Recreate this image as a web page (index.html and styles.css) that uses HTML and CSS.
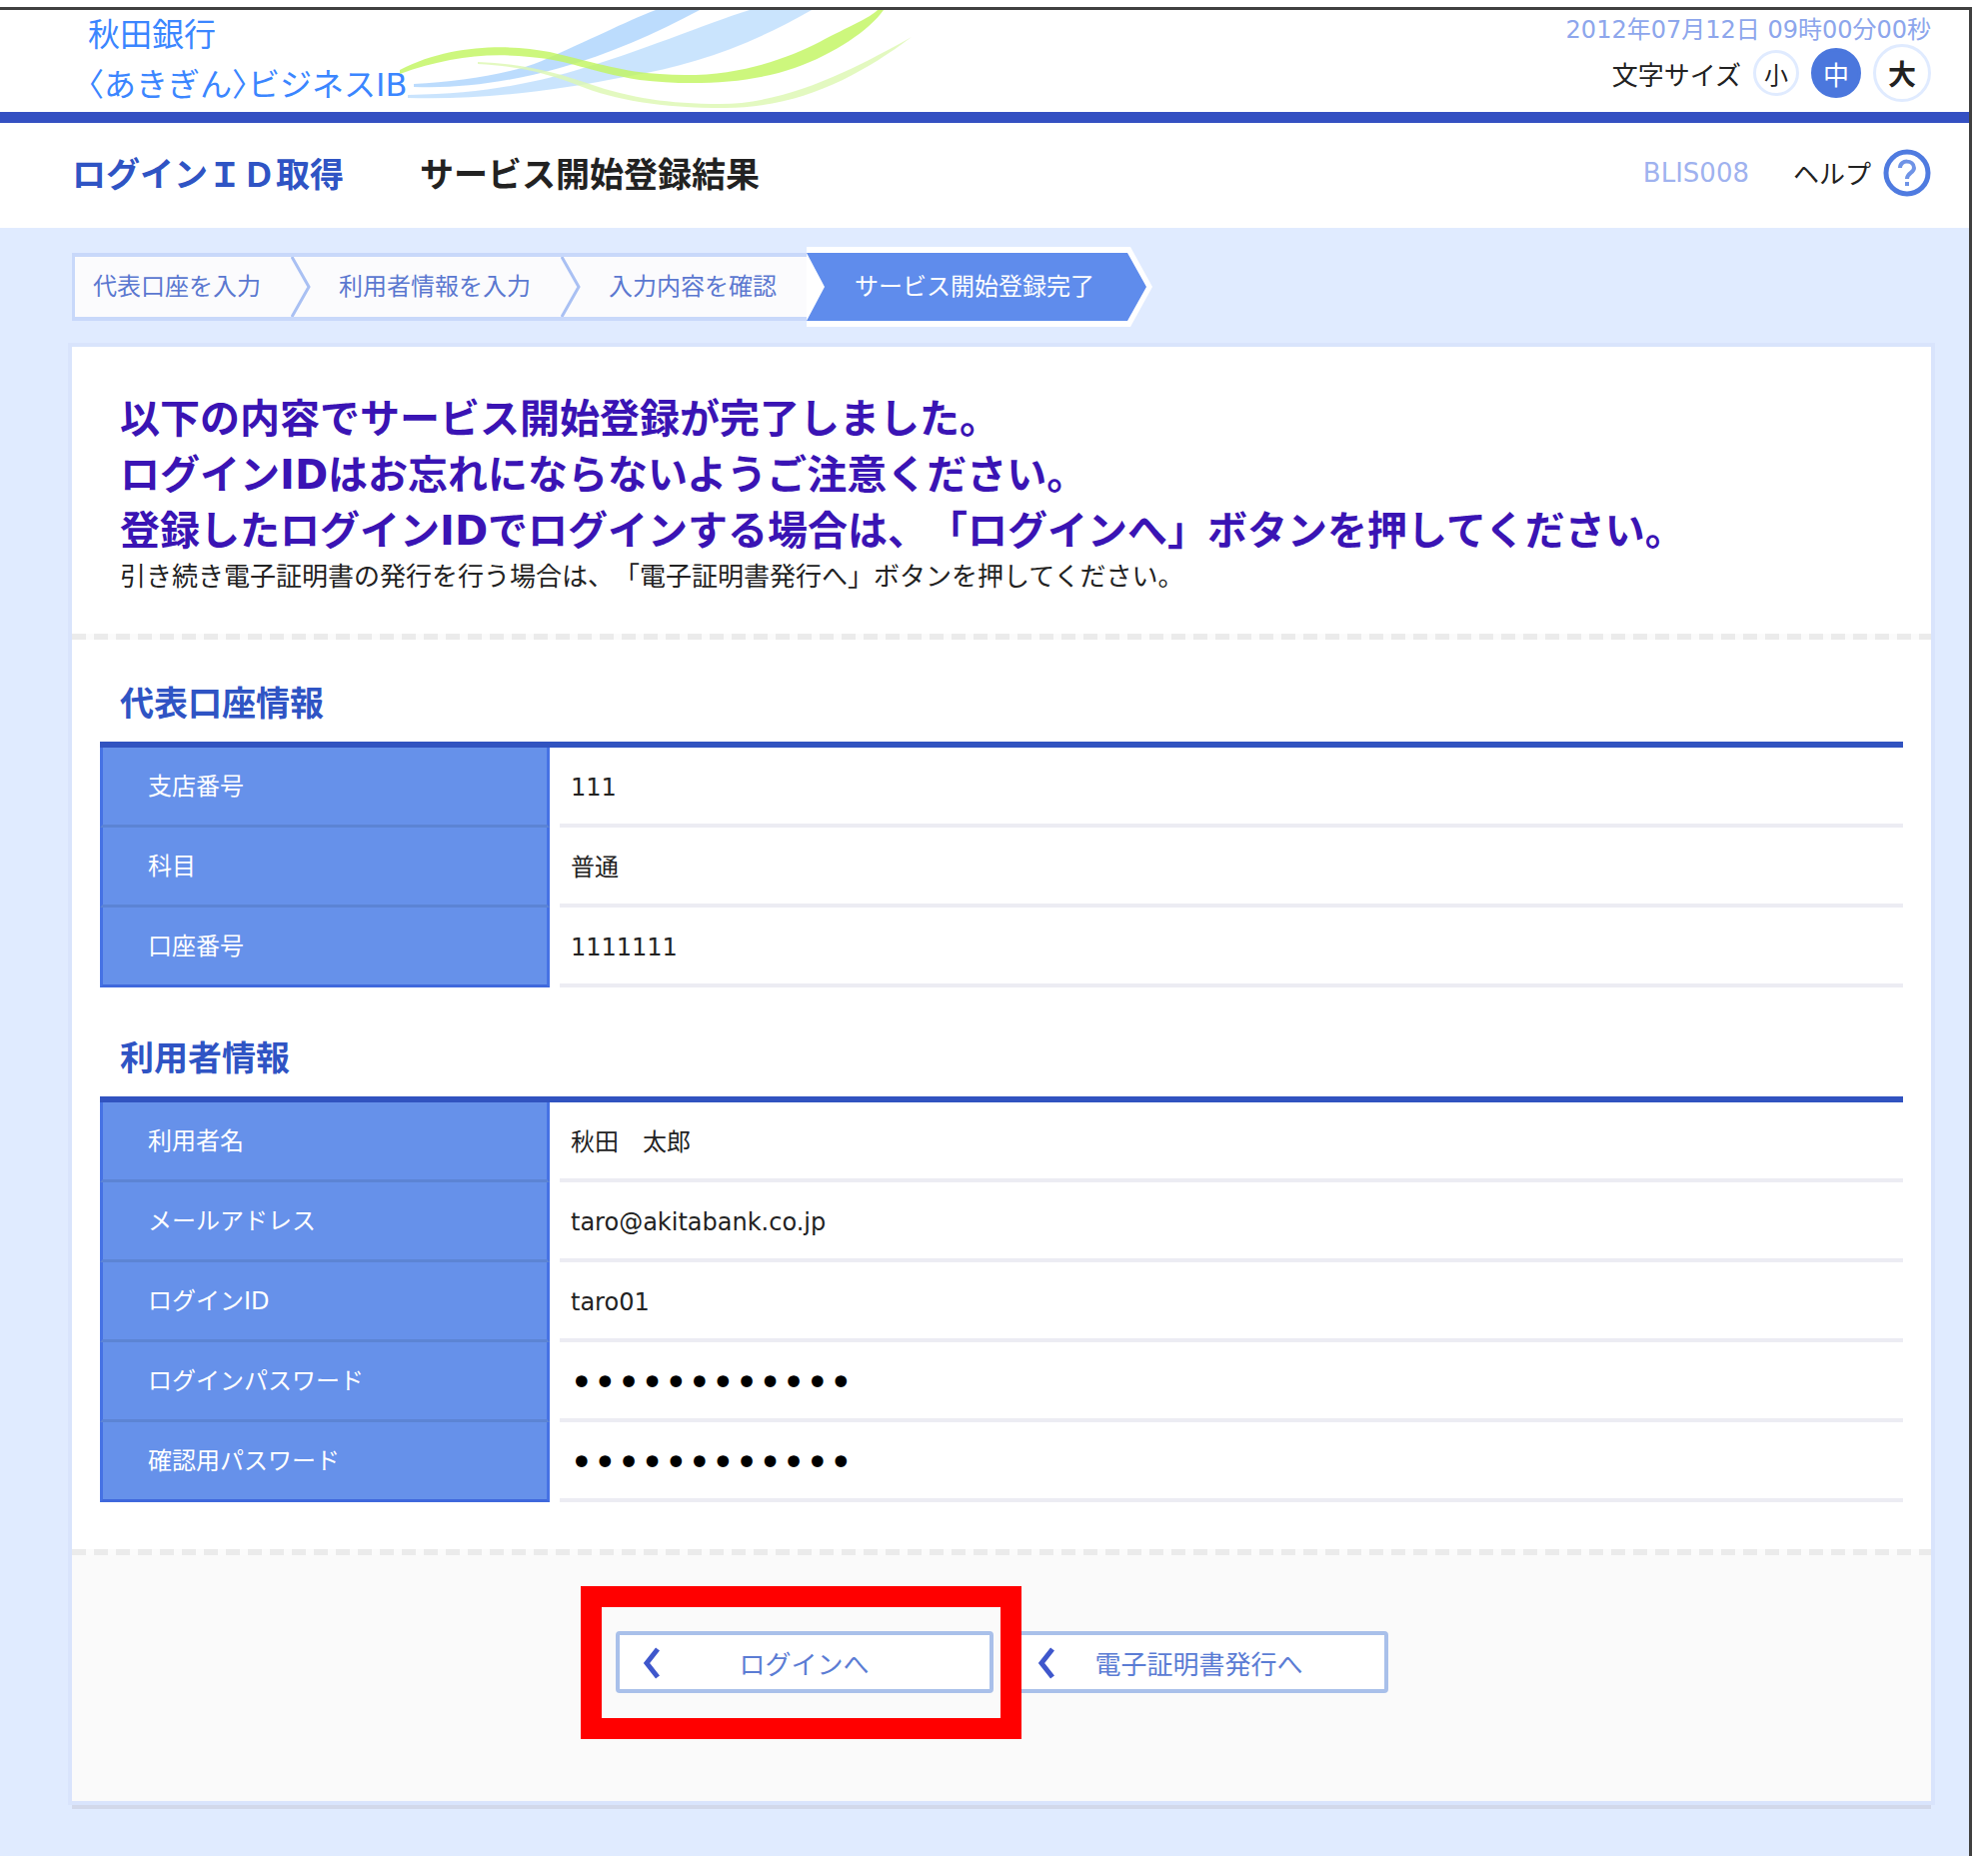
FILE: index.html
```html
<!DOCTYPE html>
<html lang="ja">
<head>
    <meta charset="UTF-8">
    <meta name="viewport" content="width=device-width, initial-scale=1.0">
    <title>サービス開始登録結果</title>
    <link rel="stylesheet" href="styles.css">
</head>
<body>
    <div class="frame">
        <header class="header">
            <div class="logo">秋田銀行<br>〈あきぎん〉ビジネスIB</div>
            <svg class="wave" width="520" height="102" viewBox="0 0 520 102" aria-hidden="true">
                <path d="M14 74C60 72 110 64 142 51C190 30 225 12 256 0H300C255 24 210 44 160 58C110 72 60 79 14 77Z" fill="#8fc4fb" opacity=".6"/>
                <path d="M8 85C80 84 130 74 174 61C240 42 305 14 350 0H412C350 36 290 56 230 66C150 82 80 90 8 88Z" fill="#a6d2fc" opacity=".6"/>
                <path d="M0 60C50 34 110 34 150 42C200 54 225 62 260 64C330 70 385 50 420 32C450 16 470 8 478 0H484C470 20 435 44 395 58C350 74 290 76 240 70C190 62 170 50 130 47C85 42 45 48 0 64Z" fill="#c0f55c" opacity=".8"/>
                <path d="M78 52C130 54 160 64 190 74C230 88 270 94 320 94C390 94 460 56 512 27C460 66 400 98 325 98C260 98 215 90 180 76C150 64 120 56 78 54Z" fill="#dcf8b0" opacity=".8"/>
            </svg>
            <div class="tools">
                <div class="date">2012年07月12日 09時00分00秒</div>
                <div class="sizes">
                    <span>文字サイズ</span>
                    <button type="button" class="size small">小</button>
                    <button type="button" class="size medium">中</button>
                    <button type="button" class="size large">大</button>
                </div>
            </div>
        </header>

        <div class="title-bar">
            <span class="category">ログインＩＤ取得</span>
            <h1>サービス開始登録結果</h1>
            <span class="page-id">BLIS008</span>
            <a class="help" href="#">ヘルプ
                <svg width="48" height="48" viewBox="0 0 48 48" aria-hidden="true">
                    <circle cx="24" cy="24" r="21" fill="#fff" stroke="#4f7be0" stroke-width="5"/>
                    <path d="M17 19C17 10 31 11 31 19C31 24 24 24 24 30M24 33V37" fill="none" stroke="#6f93e6" stroke-width="4"/>
                </svg>
            </a>
        </div>

        <main class="content">
            <ol class="steps">
                <li class="step first">代表口座を入力</li>
                <li class="arrow" aria-hidden="true"><svg width="20" height="60" viewBox="0 0 20 60"><path d="M1 0L18 30L1 60" fill="none" stroke="#a9c0f3" stroke-width="3"/></svg></li>
                <li class="step">利用者情報を入力</li>
                <li class="arrow" aria-hidden="true"><svg width="20" height="60" viewBox="0 0 20 60"><path d="M1 0L18 30L1 60" fill="none" stroke="#a9c0f3" stroke-width="3"/></svg></li>
                <li class="step">入力内容を確認</li>
                <li class="current" aria-current="step"><span>サービス開始登録完了</span></li>
            </ol>

            <div class="card">
                <div class="message">
                    <p class="lead">以下の内容でサービス開始登録が完了しました。<br>ログインIDはお忘れにならないようご注意ください。<br>登録したログインIDでログインする場合は、「ログインへ」ボタンを押してください。</p>
                    <p class="note">引き続き電子証明書の発行を行う場合は、「電子証明書発行へ」ボタンを押してください。</p>
                </div>
                <div class="dash"></div>

                <section class="info">
                    <h2>代表口座情報</h2>
                    <table>
                        <tr><th scope="row">支店番号</th><td>111</td></tr>
                        <tr><th scope="row">科目</th><td>普通</td></tr>
                        <tr><th scope="row">口座番号</th><td>1111111</td></tr>
                    </table>
                    <h2>利用者情報</h2>
                    <table>
                        <tr><th scope="row">利用者名</th><td>秋田　太郎</td></tr>
                        <tr><th scope="row">メールアドレス</th><td>taro@akitabank.co.jp</td></tr>
                        <tr><th scope="row">ログインID</th><td>taro01</td></tr>
                        <tr><th scope="row">ログインパスワード</th><td class="dots">••••••••••••</td></tr>
                        <tr><th scope="row">確認用パスワード</th><td class="dots">••••••••••••</td></tr>
                    </table>
                </section>

                <div class="dash"></div>
                <div class="actions">
                    <div class="marked">
                        <button type="button" class="btn">
                            <svg width="18" height="32" viewBox="0 0 18 32" aria-hidden="true"><path d="M15 2L4 16L15 30" fill="none" stroke="#3f57cc" stroke-width="5"/></svg>
                            ログインへ
                        </button>
                    </div>
                    <button type="button" class="btn">
                        <svg width="18" height="32" viewBox="0 0 18 32" aria-hidden="true"><path d="M15 2L4 16L15 30" fill="none" stroke="#3f57cc" stroke-width="5"/></svg>
                        電子証明書発行へ
                    </button>
                </div>
            </div>
        </main>
    </div>
</body>
</html>
```
FILE: styles.css
```css
* { box-sizing: border-box; }
body {
    margin: 0;
    padding: 7px 16px 0 0;
    min-height: 100vh;
    display: flex;
    flex-direction: column;
    background: #fff;
    color: #222;
    font-family: "DejaVu Sans", "Noto Sans CJK JP", sans-serif;
    font-size: 24px;
}
h1, h2, p, ol { margin: 0; padding: 0; }
button { font-family: inherit; cursor: pointer; }
svg { display: block; }

.frame { flex: 1; border: solid #404040; border-width: 3px 3px 0 0; background: #e0ebff; }

/* header */
.header { display: flex; height: 113px; padding: 0 38px 0 88px; background: #fff; border-bottom: 11px solid #3450c2; }
.logo { width: 312px; color: #3b86ff; font-size: 32px; line-height: 50px; white-space: nowrap; font-feature-settings: "halt"; }
.tools { flex: 1; display: flex; flex-direction: column; align-items: flex-end; padding-top: 4px; }
.date { color: #8da6ec; line-height: 32px; }
.sizes { display: flex; align-items: center; gap: 12px; height: 54px; font-size: 26px; }
.size { display: flex; align-items: center; justify-content: center; padding: 0; background: #fff; border: 3px solid #e0ebff; border-radius: 50%; color: #222; }
.small { width: 46px; height: 46px; font-size: 24px; }
.medium { width: 50px; height: 50px; font-size: 26px; background: #4b77dd; border-color: #4b77dd; color: #fff; }
.large { width: 58px; height: 58px; font-size: 28px; font-weight: bold; }

.title-bar { display: flex; align-items: center; height: 105px; padding: 0 38px 6px 72px; background: #fff; font-size: 34px; font-weight: bold; }
.category { color: #2f54c4; }
.title-bar h1 { flex: 1; margin-left: 76px; font-size: 34px; }
.page-id { color: #9fb2ef; font-size: 26px; font-weight: normal; }
.help { display: flex; align-items: center; gap: 12px; margin-left: 44px; color: #222; font-size: 26px; font-weight: normal; text-decoration: none; }

/* steps */
.content { padding: 19px 38px 0 72px; }
.steps { display: flex; align-items: center; list-style: none; color: #5b78d0; white-space: nowrap; }
.step, .arrow { height: 68px; background: #fbfbfd; border: solid #c8d8fa; border-width: 4px 0; line-height: 60px; }
.step { padding: 0 30px 0 28px; }
.first { padding-left: 18px; border-left-width: 3px; }
.current { padding: 6px 6px 6px 0; background: #fff; clip-path: polygon(0 0, calc(100% - 22px) 0, 100% 50%, calc(100% - 22px) 100%, 0 100%); }
.current span { display: block; padding: 0 52px 0 48px; line-height: 68px; background: #5f8cec; color: #fff; clip-path: polygon(0 0, calc(100% - 19px) 0, 100% 50%, calc(100% - 19px) 100%, 0 100%, 18px 50%); }

/* card */
.card { margin-top: 20px; background: #fff; box-shadow: 0 0 0 4px #d9e4fc, 0 8px 0 0 #d2d8ea; }
.message { padding: 44px 48px 39px; text-spacing-trim: space-all; }
.lead { color: #3a14b4; font-size: 40px; font-weight: bold; line-height: 56px; }
.note { font-size: 26px; line-height: 36px; }
.dash { height: 6px; background: repeating-linear-gradient(90deg, #ebebeb 0 14px, #fbfbfb 14px 22px); }

.info { padding: 42px 28px 47px; }
.info h2 { margin-bottom: 16px; padding-left: 20px; color: #2f54c4; font-size: 34px; line-height: 44px; }
.info table { width: 100%; border-spacing: 0; border-top: 6px solid #3153c0; }
.info table + h2 { margin-top: 49px; }
.info th, .info td { height: 80px; padding: 0; line-height: 36px; text-align: left; }
.info th { width: 450px; padding-left: 45px; background: #6691ea; border: 3px solid #4672e4; border-top: none; border-bottom-color: #5c84d4; color: #fff; font-weight: normal; }
.info tr:last-child th { border-bottom-color: #3f68dc; }
.info td { padding-left: 21px; background: linear-gradient(#ececf3, #ececf3) no-repeat 10px 100% / 100% 4px; }
.info .dots { padding-left: 20px; color: #000; font-size: 40px; }

.actions { display: flex; justify-content: center; gap: 17px; padding: 76px 0 108px; background: #fafafa; }
/* red marker drawn around the first button */
.marked { position: relative; z-index: 1; }
.marked::after { content: ""; position: absolute; inset: -45px -28px -46px -35px; border: 21px solid #f00; pointer-events: none; }
.btn { position: relative; width: 378px; height: 62px; padding: 0; background: #fff; border: 4px solid #a9c0ea; border-radius: 4px; color: #5b7cd4; font-size: 26px; }
.btn svg { position: absolute; left: 23px; top: 12px; }
```
